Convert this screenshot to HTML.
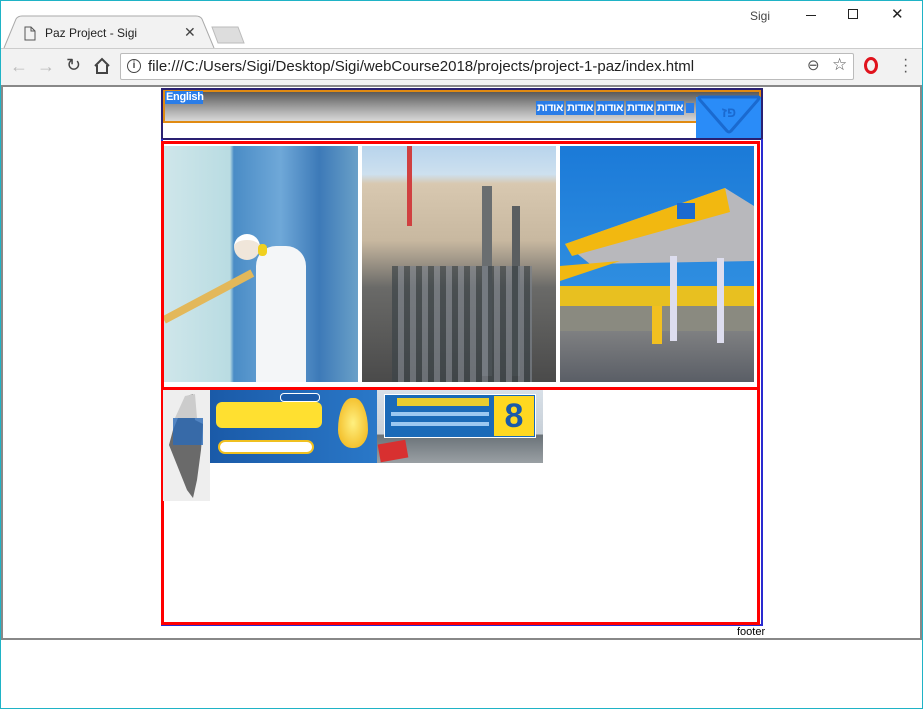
<!DOCTYPE html>
<html><head><meta charset="utf-8"><style>
*{margin:0;padding:0;box-sizing:border-box}
body{width:923px;height:709px;overflow:hidden;background:#fff;font-family:"Liberation Sans",Arial,sans-serif;position:relative}
.a{position:absolute}
.nav{position:absolute;top:101px;height:14px;width:28px;overflow:hidden;white-space:nowrap;background:#2a7de8;color:#fff;font:bold 11px "Liberation Sans","Noto Sans CJK SC",sans-serif;line-height:14px;text-align:center;letter-spacing:-0.5px;direction:rtl}
</style></head><body>
<div class="a" style="left:0;top:0;width:923px;height:709px;border:1px solid #1fb3c6"></div>
<div class="a" style="left:1px;top:1px;width:921px;height:47px;background:#fff"></div>
<svg class="a" style="left:0;top:15px" width="260" height="34"><path d="M4 33 L16 4 Q18 1 22 1 L196 1 Q200 1 202 4 L214 33" fill="#f2f2f2" stroke="#aaa"/><path d="M212 12 L238 12 L244 28 L218 28 Z" fill="#ddd" stroke="#bbb"/></svg>
<svg class="a" style="left:24px;top:26px" width="12" height="15"><path d="M1 1 H7 L11 5 V14 H1 Z M7 1 V5 H11" fill="none" stroke="#555"/></svg>
<div class="a" style="left:45px;top:26px;font-size:12px;color:#222">Paz Project - Sigi</div>
<div class="a" style="left:184px;top:24px;font-size:14px;color:#444">✕</div>
<div class="a" style="left:750px;top:9px;font-size:12px;color:#444">Sigi</div>
<div class="a" style="left:806px;top:15px;width:10px;height:1px;background:#222"></div>
<div class="a" style="left:848px;top:9px;width:10px;height:10px;border:1px solid #222"></div>
<div class="a" style="left:891px;top:5px;font-size:15px;color:#222">✕</div>
<div class="a" style="left:1px;top:48px;width:921px;height:38px;background:#f2f2f2;border-top:1px solid #ccc"></div>
<div class="a" style="left:10px;top:56px;font-size:18px;color:#bbb">←</div>
<div class="a" style="left:37px;top:56px;font-size:18px;color:#bbb">→</div>
<div class="a" style="left:66px;top:55px;font-size:18px;color:#444">↻</div>
<svg class="a" style="left:93px;top:57px" width="18" height="18"><path d="M2 9 L9 2 L16 9 M4 8 V16 H14 V8" fill="none" stroke="#444" stroke-width="2"/></svg>
<div class="a" style="left:120px;top:53px;width:734px;height:27px;background:#fff;border:1px solid #bbb;border-radius:2px"></div>
<div class="a" style="left:127px;top:59px;width:14px;height:14px;border:1.5px solid #444;border-radius:50%;font-size:10px;text-align:center;line-height:11px;font-weight:bold;color:#444">i</div>
<div class="a" style="left:148px;top:58px;font-size:15px;color:#222">file:///C:/Users/Sigi/Desktop/Sigi/webCourse2018/projects/project-1-paz/index.html</div>
<div class="a" style="left:807px;top:56px;font-size:15px;color:#555">⊖</div>
<div class="a" style="left:832px;top:55px;font-size:17px;color:#555">☆</div>
<div class="a" style="left:864px;top:57px;width:14px;height:17px;border:3px solid #e0131d;border-radius:50%"></div>
<div class="a" style="left:903px;top:57px;font-size:16px;color:#555;line-height:6px">·<br>·<br>·</div>
<div class="a" style="left:1px;top:85px;width:921px;height:555px;border:2px solid #888"></div>
<div class="a" style="left:161px;top:88px;width:602px;height:52px;border:2px solid #2a2072"></div>
<div class="a" style="left:163px;top:90px;width:598px;height:33px;border:2px solid #e08a12;background:linear-gradient(#5a5a5a,#b5b5b5 70%,#d8d8d8)"></div>
<div class="a" style="left:165px;top:91px;width:38px;height:13px;background:#2a7de8;color:#fff;font-size:11px;font-weight:bold;line-height:13px;padding-left:1px;letter-spacing:-0.3px">English</div>
<div class="a" style="left:696px;top:97px;width:65px;height:41px;background:#2a8cf8"></div>
<svg class="a" style="left:697px;top:93px" width="64" height="44"><path d="M3 4 H61 Q63 4 61 7 L34 38 Q32 40 30 38 L3 7 Q1 4 3 4 Z" fill="#2a8cf8" stroke="#1a6ad0" stroke-width="3"/><text x="32" y="24" font-size="14" font-weight="bold" fill="#1a6ad0" text-anchor="middle" font-family="Liberation Sans, Noto Sans CJK SC, sans-serif">פז</text></svg>
<div class="a" style="left:686px;top:103px;width:8px;height:10px;background:#2a7de8"></div>
<div class="nav" style="left:656px">אודות</div>
<div class="nav" style="left:626px">אודות</div>
<div class="nav" style="left:596px">אודות</div>
<div class="nav" style="left:566px">אודות</div>
<div class="nav" style="left:536px">אודות</div>
<div class="a" style="left:161px;top:139px;width:602px;height:487px;border:2px solid #2a2ad0;border-top:none"></div>
<div class="a" style="left:161px;top:141px;width:599px;height:249px;border:3px solid #f00"></div>
<div class="a" style="left:161px;top:387px;width:599px;height:238px;border:3px solid #f00"></div>
<div class="a" style="left:164px;top:146px;width:194px;height:236px;overflow:hidden;background:linear-gradient(90deg,#cfe6ea 0,#b9dce2 34%,#4a8cc6 36%,#6fa8d8 60%,#3d7ab8 80%,#6aa0c8 100%)">
 <div class="a" style="left:0;top:170px;width:100px;height:8px;background:#e3b85a;transform:rotate(-28deg);transform-origin:left"></div>
 <div class="a" style="left:92px;top:100px;width:50px;height:140px;background:#f4f6f8;border-radius:20px 20px 0 0"></div>
 <div class="a" style="left:70px;top:88px;width:26px;height:26px;background:#f0e6da;border-radius:50%;border-top:6px solid #fff"></div>
 <div class="a" style="left:94px;top:98px;width:9px;height:12px;background:#f0d020;border-radius:4px"></div>
</div>
<div class="a" style="left:362px;top:146px;width:194px;height:236px;overflow:hidden;background:linear-gradient(#b8d4ec 0,#cde0ef 12%,#d8c8b0 16%,#c8b8a0 40%,#6a6a68 60%,#4a4a4a 100%)">
 <div class="a" style="left:45px;top:0;width:5px;height:80px;background:#d04040"></div>
 <div class="a" style="left:120px;top:40px;width:10px;height:190px;background:#6a6e70"></div>
 <div class="a" style="left:150px;top:60px;width:8px;height:170px;background:#5a5e60"></div>
 <div class="a" style="left:30px;top:120px;width:140px;height:116px;background:repeating-linear-gradient(90deg,#3c4448 0,#3c4448 6px,#7a8088 6px,#7a8088 12px);opacity:.7"></div>
</div>
<div class="a" style="left:560px;top:146px;width:194px;height:236px;overflow:hidden;background:linear-gradient(#1b7ad8 0,#2f8ee0 60%,#8a8a8a 72%,#5a5e66 100%)">
 <svg class="a" style="left:0;top:0" width="194" height="236"><path d="M5 98 L165 42 L194 60 L194 115 L30 118 Z" fill="#b8b8bc"/><path d="M5 98 L165 42 L170 66 L12 110 Z" fill="#f2b810"/><path d="M0 120 L60 115 L0 135 Z" fill="#f2b810"/><rect x="0" y="140" width="194" height="45" fill="#e8c020"/><rect x="0" y="160" width="194" height="25" fill="#8a8a80"/><rect x="110" y="110" width="7" height="85" fill="#dde"/><rect x="157" y="112" width="7" height="85" fill="#dde"/><rect x="92" y="160" width="10" height="38" fill="#f2c020"/><rect x="117" y="57" width="18" height="16" fill="#1b6ad0"/></svg>
</div>
<div class="a" style="left:163px;top:390px;width:47px;height:111px;background:#eee"><svg width="47" height="111"><path d="M24 6 L30 4 L32 30 L40 34 L38 60 L34 90 L30 108 L24 100 L12 70 L6 55 L10 40 Z" fill="#6a6a6a"/><path d="M10 28 L40 28 L40 55 L10 55 Z" fill="#2a6ab8" opacity=".8"/><path d="M22 6 L32 4 L34 28 L12 28 Z" fill="#ccc"/></svg></div>
<div class="a" style="left:210px;top:390px;width:167px;height:73px;background:linear-gradient(90deg,#1a5aa8,#2a78c8)">
 <div class="a" style="left:6px;top:12px;width:106px;height:26px;background:#ffe030;border-radius:6px"></div>
 <div class="a" style="left:8px;top:50px;width:96px;height:14px;background:#fff;border:2px solid #f0c020;border-radius:7px"></div>
 <div class="a" style="left:70px;top:3px;width:40px;height:9px;background:#1a5aa8;border:1px solid #fff;border-radius:4px"></div>
 <div class="a" style="left:128px;top:8px;width:30px;height:50px;background:radial-gradient(#fff080,#f0b010);border-radius:50% 50% 50% 50%/70% 70% 40% 40%"></div>
</div>
<div class="a" style="left:377px;top:390px;width:166px;height:73px;background:linear-gradient(#d8e0e8 0,#c8d0d8 60%,#6a7278 62%,#9aa0a4 100%)">
 <div class="a" style="left:7px;top:4px;width:152px;height:44px;background:#1a6ab8;border:1px solid #fff"></div>
 <div class="a" style="left:117px;top:6px;width:40px;height:40px;background:#ffd820;color:#1a5aa8;font-size:34px;font-weight:bold;text-align:center;line-height:40px">8</div>
 <div class="a" style="left:20px;top:8px;width:92px;height:8px;background:#ffd820;opacity:.9"></div>
 <div class="a" style="left:14px;top:22px;width:98px;height:4px;background:#9cc8f0"></div>
 <div class="a" style="left:14px;top:32px;width:98px;height:4px;background:#9cc8f0"></div>
 <div class="a" style="left:2px;top:52px;width:28px;height:18px;background:#d83030;transform:rotate(-10deg)"></div>
</div>
<div class="a" style="left:737px;top:626px;font-size:11px;color:#000">footer</div>
</body></html>
